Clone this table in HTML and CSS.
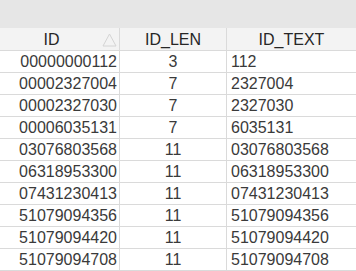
FILE: index.html
```html
<!DOCTYPE html>
<html>
<head>
<meta charset="utf-8">
<link rel="stylesheet" href="styles.css">
</head>
<body>
<div class="page">
  <div class="toolbar"></div>
  <div class="grid">
    <div class="hcell c1 sorted">ID<svg class="sort" width="15" height="14" viewBox="0 0 15 14"><path d="M7.5 1 L14 13 L1 13 Z" fill="none" stroke="#d4d4d4" stroke-width="1"/></svg></div>
    <div class="hcell c2">ID_LEN</div>
    <div class="hcell c3">ID_TEXT</div>

    <div class="cell c1">00000000112</div><div class="cell c2">3</div><div class="cell c3">112</div>
    <div class="cell c1">00002327004</div><div class="cell c2">7</div><div class="cell c3">2327004</div>
    <div class="cell c1">00002327030</div><div class="cell c2">7</div><div class="cell c3">2327030</div>
    <div class="cell c1">00006035131</div><div class="cell c2">7</div><div class="cell c3">6035131</div>
    <div class="cell c1">03076803568</div><div class="cell c2">11</div><div class="cell c3">03076803568</div>
    <div class="cell c1">06318953300</div><div class="cell c2">11</div><div class="cell c3">06318953300</div>
    <div class="cell c1">07431230413</div><div class="cell c2">11</div><div class="cell c3">07431230413</div>
    <div class="cell c1">51079094356</div><div class="cell c2">11</div><div class="cell c3">51079094356</div>
    <div class="cell c1">51079094420</div><div class="cell c2">11</div><div class="cell c3">51079094420</div>
    <div class="cell c1">51079094708</div><div class="cell c2">11</div><div class="cell c3">51079094708</div>
  </div>
</div>
</body>
</html>
```

FILE: styles.css
```css
html, body {
  margin: 0;
  padding: 0;
  background: #ffffff;
}
.page {
  width: 356px;
  height: 271px;
  overflow: hidden;
  font-family: "Liberation Sans", Arial, sans-serif;
  font-size: 16px;
  color: #3a3a3a;
}
.toolbar {
  height: 28px;
  background: #e6e6e6;
}
.grid {
  display: grid;
  grid-template-columns: 120px 107px 129px;
}
.hcell, .cell {
  box-sizing: border-box;
  border-bottom: 1px solid #dadada;
  white-space: nowrap;
  overflow: hidden;
}
.c1, .c2 {
  border-right: 1px solid #dadada;
}
.hcell {
  height: 23px;
  padding-top: 2px;
  line-height: 20px;
  background: #f3f3f3;
  color: #262626;
  text-align: center;
  position: relative;
}
.hcell.sorted {
  padding-right: 16px;
}
.sort {
  position: absolute;
  right: 2px;
  top: 5px;
}
.cell {
  height: 22px;
  line-height: 21px;
}
.cell.c1 {
  text-align: right;
  padding-right: 2px;
}
.cell.c2 {
  text-align: center;
}
.cell.c3 {
  text-align: left;
  padding-left: 4px;
}
```
